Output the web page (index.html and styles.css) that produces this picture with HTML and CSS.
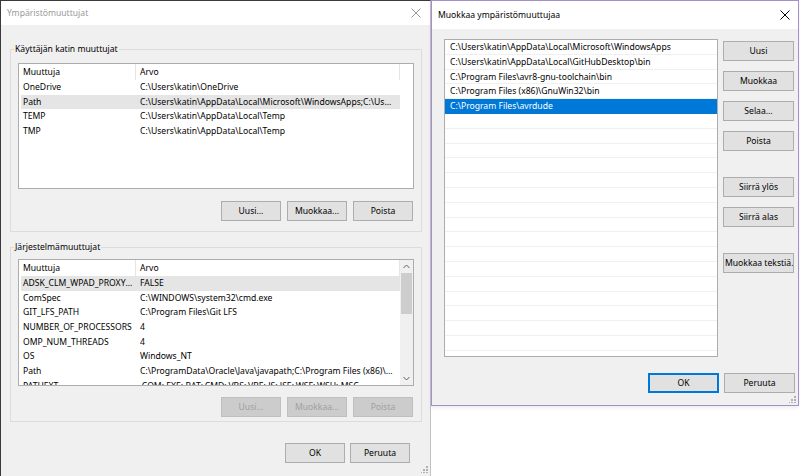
FILE: index.html
```html
<!DOCTYPE html>
<html lang="fi">
<head>
  <meta charset="UTF-8">
  <meta name="viewport" content="width=device-width, initial-scale=1.0">
  <title>Ympäristömuuttujat</title>
  <link rel="stylesheet" href="styles.css">
</head>
<body>
  <div class="desk">

    <!-- back window: environment variables -->
    <div class="win win-env">
      <div class="titlebar">
        <span class="title">Ympäristömuuttujat</span>
        <svg class="close" width="10" height="10" viewBox="0 0 10 10"><path d="M0.5 0.5L9.5 9.5M9.5 0.5L0.5 9.5"/></svg>
      </div>
      <div class="env-body">

        <div class="group group-user">
          <span class="group-label">Käyttäjän katin muuttujat</span>
          <div class="listview lv-user">
            <div class="lv-main">
              <div class="lv-head"><span class="c1">Muuttuja</span><span class="c2">Arvo</span></div>
              <div class="lv-row"><span class="c1">OneDrive</span><span class="c2">C:\Users\katin\OneDrive</span></div>
              <div class="lv-row hot"><span class="c1">Path</span><span class="c2">C:\Users\katin\AppData\Local\Microsoft\WindowsApps;C:\Users\katin\AppData\Local\GitHubDesktop\bin</span></div>
              <div class="lv-row"><span class="c1">TEMP</span><span class="c2">C:\Users\katin\AppData\Local\Temp</span></div>
              <div class="lv-row"><span class="c1">TMP</span><span class="c2">C:\Users\katin\AppData\Local\Temp</span></div>
            </div>
          </div>
          <div class="btn-row">
            <button class="btn">Uusi...</button>
            <button class="btn">Muokkaa...</button>
            <button class="btn">Poista</button>
          </div>
        </div>

        <div class="group group-sys">
          <span class="group-label">Järjestelmämuuttujat</span>
          <div class="listview lv-sys">
            <div class="lv-main">
              <div class="lv-head"><span class="c1">Muuttuja</span><span class="c2">Arvo</span></div>
              <div class="lv-row hot"><span class="c1">ADSK_CLM_WPAD_PROXY_CHECK</span><span class="c2">FALSE</span></div>
              <div class="lv-row"><span class="c1">ComSpec</span><span class="c2">C:\WINDOWS\system32\cmd.exe</span></div>
              <div class="lv-row"><span class="c1">GIT_LFS_PATH</span><span class="c2">C:\Program Files\Git LFS</span></div>
              <div class="lv-row"><span class="c1">NUMBER_OF_PROCESSORS</span><span class="c2">4</span></div>
              <div class="lv-row"><span class="c1">OMP_NUM_THREADS</span><span class="c2">4</span></div>
              <div class="lv-row"><span class="c1">OS</span><span class="c2">Windows_NT</span></div>
              <div class="lv-row"><span class="c1">Path</span><span class="c2">C:\ProgramData\Oracle\Java\javapath;C:\Program Files (x86)\Common Files</span></div>
              <div class="lv-row"><span class="c1">PATHEXT</span><span class="c2">.COM;.EXE;.BAT;.CMD;.VBS;.VBE;.JS;.JSE;.WSF;.WSH;.MSC</span></div>
            </div>
            <div class="scrollbar">
              <svg class="arrow" width="13" height="13" viewBox="0 0 13 13"><path d="M3.5 8L6.5 5L9.5 8"/></svg>
              <div class="track"><div class="thumb"></div></div>
              <svg class="arrow" width="13" height="13" viewBox="0 0 13 13"><path d="M3.5 5L6.5 8L9.5 5"/></svg>
            </div>
          </div>
          <div class="btn-row">
            <button class="btn" disabled>Uusi...</button>
            <button class="btn" disabled>Muokkaa...</button>
            <button class="btn" disabled>Poista</button>
          </div>
        </div>

        <div class="dlg-buttons">
          <button class="btn">OK</button>
          <button class="btn">Peruuta</button>
        </div>
      </div>
      <svg class="grip grip-env" width="7" height="7" viewBox="0 0 7 7"><path d="M5 0h2v2H5zM2 3h2v2H2zM5 3h2v2H5zM-1 6h2v1H-1zM2 6h2v1H2zM5 6h2v1H5z"/></svg>
    </div>

    <!-- front window: edit variable -->
    <div class="win win-edit">
      <div class="titlebar">
        <span class="title">Muokkaa ympäristömuuttujaa</span>
        <svg class="close" width="10" height="10" viewBox="0 0 10 10"><path d="M0.5 0.5L9.5 9.5M9.5 0.5L0.5 9.5"/></svg>
      </div>
      <div class="edit-body">
        <div class="edit-main">
          <div class="pathlist">
            <div class="path-item">C:\Users\katin\AppData\Local\Microsoft\WindowsApps</div>
            <div class="path-item">C:\Users\katin\AppData\Local\GitHubDesktop\bin</div>
            <div class="path-item">C:\Program Files\avr8-gnu-toolchain\bin</div>
            <div class="path-item">C:\Program Files (x86)\GnuWin32\bin</div>
            <div class="path-item selected">C:\Program Files\avrdude</div>
            <div class="path-item"></div>
            <div class="path-item"></div>
            <div class="path-item"></div>
            <div class="path-item"></div>
            <div class="path-item"></div>
            <div class="path-item"></div>
            <div class="path-item"></div>
            <div class="path-item"></div>
            <div class="path-item"></div>
            <div class="path-item"></div>
            <div class="path-item"></div>
            <div class="path-item"></div>
            <div class="path-item"></div>
            <div class="path-item"></div>
            <div class="path-item"></div>
            <div class="path-item"></div>
            <div class="path-item"></div>
          </div>
          <div class="side-buttons">
            <button class="btn">Uusi</button>
            <button class="btn">Muokkaa</button>
            <button class="btn">Selaa...</button>
            <button class="btn">Poista</button>
            <button class="btn spaced">Siirrä ylös</button>
            <button class="btn">Siirrä alas</button>
            <button class="btn spaced btn-long">Muokkaa tekstiä...</button>
          </div>
        </div>
        <div class="edit-buttons">
          <button class="btn btn-default">OK</button>
          <button class="btn">Peruuta</button>
        </div>
      </div>
      <svg class="grip grip-edit" width="7" height="7" viewBox="0 0 7 7"><path d="M5 0h2v2H5zM2 3h2v2H2zM5 3h2v2H5zM-1 6h2v1H-1zM2 6h2v1H2zM5 6h2v1H5z"/></svg>
    </div>

  </div>
</body>
</html>
```

FILE: styles.css
```css
* {
  box-sizing: border-box;
}

body {
  margin: 0;
  background-color: #fff;
  font-family: "Noto Sans", "Open Sans", sans-serif;
  font-size: 8.6px;
  color: #000;
}

.desk {
  position: relative;
  width: 800px;
  height: 476px;
  overflow: hidden;
}

.win {
  position: absolute;
  top: 0;
  background-color: #f0f0f0;
}

.titlebar {
  display: flex;
  align-items: center;
  justify-content: space-between;
  background-color: #fff;
}

.close {
  fill: none;
  stroke-width: 1;
}

/* ---------- environment variables window ---------- */

.win-env {
  left: 0;
  width: 431px;
  height: 490px;
  border-top: 1px solid #3a3a3a;
  border-left: 1px solid #3a3a3a;
  border-right: 1px solid #c3c3c3;
}

.win-env .titlebar {
  height: 24px;
  padding: 0 9px 0 6px;
}

.win-env .title {
  color: #9a9a9a;
}

.win-env .close {
  stroke: #9a9a9a;
}

.env-body {
  padding: 24px 0 0 9px;
}

.group {
  position: relative;
  width: 412px;
  border: 1px solid #dcdcdc;
  padding: 13px 8px 10px 7px;
}

.group-sys {
  margin-top: 15px;
  padding: 11px 8px 4px 7px;
}

.group-label {
  position: absolute;
  top: -8px;
  left: 3px;
  padding: 0 1px;
  line-height: 14px;
  background-color: #f0f0f0;
}

.listview {
  display: flex;
  width: 396px;
  height: 126px;
  background-color: #fff;
  border: 1px solid #adadad;
  overflow: hidden;
}

.lv-sys {
  height: 127px;
}

.lv-main {
  width: 381px;
  flex: none;
}

.lv-head {
  display: flex;
  height: 16px;
  line-height: 16px;
}

.lv-head .c1 {
  width: 117px;
  padding-left: 4px;
  border-right: 1px solid #e5e5e5;
}

.lv-head .c2 {
  width: 264px;
  padding-left: 4px;
  border-right: 1px solid #e5e5e5;
}

.lv-row {
  display: flex;
  width: 379px;
  margin-left: 2px;
  height: 14.7px;
  line-height: 14.7px;
  white-space: nowrap;
}

.lv-row.hot {
  background-color: #e5e5e5;
}

.lv-row .c1 {
  width: 115px;
  padding-left: 2px;
  overflow: hidden;
  text-overflow: ellipsis;
}

.lv-row .c2 {
  width: 264px;
  padding: 0 4px;
  overflow: hidden;
  text-overflow: ellipsis;
}

.scrollbar {
  display: flex;
  flex-direction: column;
  width: 13px;
  background-color: #f0f0f0;
}

.arrow {
  flex: none;
  fill: none;
  stroke: #606060;
  stroke-width: 1;
}

.track {
  flex: 1;
  padding: 0 1px;
}

.thumb {
  height: 41px;
  background-color: #cdcdcd;
}

.btn-row {
  display: flex;
  justify-content: flex-end;
  gap: 6px;
  margin-top: 12px;
}

.group-sys .btn-row {
  margin-top: 11px;
}

.btn {
  width: 60px;
  height: 20px;
  padding: 0;
  font-family: inherit;
  font-size: 8.6px;
  color: #000;
  background-color: #e1e1e1;
  border: 1px solid #adadad;
  white-space: nowrap;
}

.btn:disabled {
  color: #a0a0a0;
  background-color: #cccccc;
  border-color: #bfbfbf;
}

.dlg-buttons {
  display: flex;
  justify-content: flex-end;
  gap: 5px;
  margin-top: 21px;
  padding-right: 20px;
}

.grip {
  position: absolute;
  fill: #b0b0b0;
}

.grip-env {
  right: 2px;
  top: 465px;
}

/* ---------- edit variable window ---------- */

.win-edit {
  left: 431px;
  width: 368px;
  height: 406px;
  border: 1px solid #a48fc8;
  box-shadow: 0 2px 4px rgba(0, 0, 0, 0.08);
}

.win-edit .titlebar {
  height: 28px;
  padding: 0 8px 0 6px;
}

.win-edit .close {
  stroke: #000;
}

.edit-body {
  padding: 10px 3px 0 12px;
}

.edit-main {
  display: flex;
  gap: 5px;
}

.pathlist {
  width: 274px;
  height: 318px;
  background-color: #fff;
  border: 1px solid #adadad;
  overflow: hidden;
}

.path-item {
  height: 14.8px;
  line-height: 14px;
  padding-left: 5px;
  border-bottom: 1px solid #f0f0f0;
  white-space: nowrap;
}

.path-item.selected {
  background-color: #0078d7;
  border-bottom-color: #0078d7;
  color: #fff;
}

.side-buttons {
  display: flex;
  flex-direction: column;
  gap: 10px;
  padding-top: 2px;
}

.side-buttons .btn {
  width: 71px;
}

.side-buttons .btn.spaced {
  margin-top: 16px;
}

.side-buttons .btn-long {
  text-align: left;
  padding-left: 1px;
  overflow: hidden;
}

.edit-buttons {
  display: flex;
  justify-content: flex-end;
  gap: 5px;
  margin-top: 16px;
}

.edit-buttons .btn {
  width: 71px;
}

.btn-default {
  border-color: #0078d7;
  box-shadow: inset 0 0 0 1px #0078d7;
}

.grip-edit {
  right: 2px;
  bottom: 2px;
}
```
